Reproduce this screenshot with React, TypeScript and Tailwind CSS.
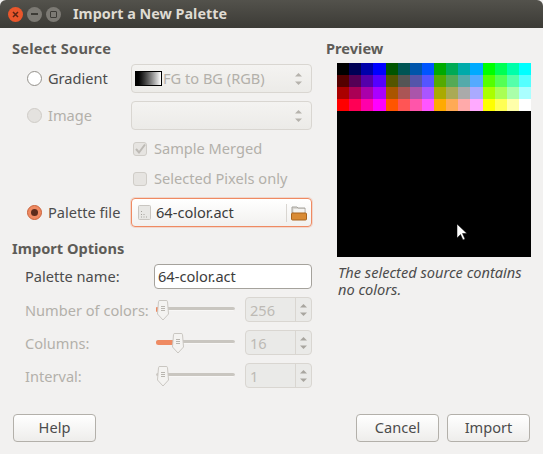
const levels = ['00', '55', 'aa', 'ff'];

const font = { fontFamily: '"Noto Sans", sans-serif' };

function UpDown({ color = '#a8a59f' }: { color?: string }) {
  return (
    <svg width="9" height="14" viewBox="0 0 9 14" fill={color}>
      <path d="M4.5 1 L8 4.5 L1 4.5 Z" />
      <path d="M1 9.5 L8 9.5 L4.5 13 Z" />
    </svg>
  );
}

function Radio({ checked, disabled }: { checked?: boolean; disabled?: boolean }) {
  if (checked) {
    return (
      <span className="ml-[15px] flex h-[15px] w-[15px] items-center justify-center rounded-full border border-[#c9623a] bg-[#ef8a62]">
        <span className="h-[7px] w-[7px] rounded-full bg-[#5c2c1c]" />
      </span>
    );
  }
  return (
    <span
      className={`ml-[15px] block h-[15px] w-[15px] rounded-full border ${
        disabled ? 'border-[#cfccc7] bg-[#e4e2df]' : 'border-[#94918b] bg-white'
      }`}
    />
  );
}

function Combo({ children }: { children?: React.ReactNode }) {
  return (
    <div className="flex h-[29px] w-[181px] items-center justify-between rounded-[4px] border border-[#d9d6d1] bg-gradient-to-b from-[#f4f3f1] to-[#ecebe8] pl-[3px] pr-[8px]">
      <div className="flex items-center gap-[1px]">{children}</div>
      <UpDown color="#b5b2ac" />
    </div>
  );
}

function Check({ label, checked }: { label: string; checked?: boolean }) {
  return (
    <div className="ml-[133px] flex h-[30px] items-center gap-[7px]">
      <span className="flex h-[14px] w-[14px] items-center justify-center rounded-[3px] border border-[#d0cdc8] bg-[#e6e4e1]">
        {checked && (
          <svg width="12" height="12" viewBox="0 0 12 12" fill="none" stroke="#bdbab5" strokeWidth="2">
            <path d="M2 6 L5 9.5 L11 1.5" />
          </svg>
        )}
      </span>
      <span className="text-[#b3b0aa]">{label}</span>
    </div>
  );
}

function Thumb() {
  return (
    <svg width="12" height="21" viewBox="0 0 12 21" className="shrink-0">
      <path
        d="M1.5 1.5 Q1.5 0.5 3 0.5 L9 0.5 Q10.5 0.5 10.5 1.5 L11.5 14 L6 20 L0.5 14 Z"
        fill="#f4f3f1"
        stroke="#c9c6c1"
      />
      <path d="M4 6.5 H8 M4 8.5 H8 M4 10.5 H8" stroke="#b8b5af" />
    </svg>
  );
}

function SliderRow({ label, value, fill, thumb }: { label: string; value: string; fill: number; thumb: number }) {
  return (
    <div className="flex h-[25px] items-center">
      <span className="ml-[25px] w-[131px] whitespace-nowrap pt-[2px] text-[#b3b0aa]">{label}</span>
      <div className="relative h-[25px] w-[79px]">
        <div className="absolute left-0 right-0 top-[10px] h-[4px] rounded-full border-b border-b-[#f8f7f6] bg-[#c9c6c0]" />
        <div className="absolute left-0 top-[10px] h-[5px] rounded-full bg-[#ef8a62]" style={{ width: fill }} />
        <div className="absolute top-[3px]" style={{ left: thumb }}>
          <Thumb />
        </div>
      </div>
      <div className="ml-[10px] flex h-[25px] w-[67px] rounded-[4px] border border-[#d9d6d1] bg-[#eaeae8]">
        <span className="flex-1 pl-[4px] leading-[25px] text-[#bdbab5]">{value}</span>
        <span className="flex w-[16px] items-center justify-center border-l border-[#d9d6d1]">
          <UpDown color="#a8a59f" />
        </span>
      </div>
    </div>
  );
}

function Button({ label }: { label: string }) {
  return (
    <button className="h-[28px] w-[83px] rounded-[4px] border border-[#b3b0aa] bg-gradient-to-b from-white to-[#eeedeb] text-[#4c4c4c]">
      {label}
    </button>
  );
}

export default function App() {
  return (
    <div className="h-[454px] w-[543px] overflow-hidden bg-[#f2f1f0] text-[14.6px] text-[#4c4c4c]" style={font}>
      {/* title bar */}
      <div className="flex h-[28px] items-center rounded-t-[6px] bg-gradient-to-b from-[#53524c] to-[#3c3b36]">
        <span className="ml-[8px] flex h-[15px] w-[15px] items-center justify-center rounded-full bg-[#e9562b]">
          <svg width="9" height="9" viewBox="0 0 9 9" stroke="#5a2413" strokeWidth="1.5">
            <path d="M2 2 L7 7 M7 2 L2 7" />
          </svg>
        </span>
        <span className="ml-[4px] flex h-[15px] w-[15px] items-center justify-center rounded-full bg-[#7c7a74]">
          <span className="h-[2px] w-[7px] bg-[#3c3b36]" />
        </span>
        <span className="ml-[4px] flex h-[15px] w-[15px] items-center justify-center rounded-full bg-[#7c7a74]">
          <span className="h-[7px] w-[7px] rounded-[1px] border border-[#3c3b36]" />
        </span>
        <span className="ml-[12px] text-[14.4px] font-bold text-[#dfdbd2]">Import a New Palette</span>
      </div>

      <div className="flex h-[386px]">
        {/* left column */}
        <div className="w-[326px] pl-[12px] pr-[14px]">
          <div className="mt-[11px] h-[25px] font-bold leading-[18px] tracking-[0.2px] text-[#5e5c58]">Select Source</div>
          <div className="flex h-[29px] items-center">
            <Radio />
            <span className="ml-[6px] w-[83px]">Gradient</span>
            <Combo>
              <span className="h-[15px] w-[27px] border border-black bg-gradient-to-r from-black to-white" />
              <span className="text-[#b3b0aa]">FG to BG (RGB)</span>
            </Combo>
          </div>
          <div className="mt-[8px] flex h-[29px] items-center">
            <Radio disabled />
            <span className="ml-[6px] w-[83px] text-[#b3b0aa]">Image</span>
            <Combo />
          </div>
          <div className="-ml-[12px] mt-[4px]">
            <Check label="Sample Merged" checked />
            <Check label="Selected Pixels only" />
          </div>
          <div className="mt-[4px] flex h-[29px] items-center">
            <Radio checked />
            <span className="ml-[6px] w-[83px]">Palette file</span>
            <div className="flex h-[29px] w-[181px] items-center rounded-[4px] border border-[#ef8a62] bg-gradient-to-b from-white to-[#f2f1ef] pl-[6px] shadow-[0_0_0_1px_rgba(239,138,98,0.25)]">
              <svg width="13" height="15" viewBox="0 0 13 15" className="shrink-0">
                <rect x="0.5" y="0.5" width="12" height="14" rx="1" fill="#e8e7e4" stroke="#c9c6c1" />
                <path d="M3.5 6 V7 M3.5 9 V10 M3.5 11.5 V12.5 M6 11.5 V12.5 M8.5 11.5 V12.5 M6 9 V10" stroke="#a5a29c" />
              </svg>
              <span className="ml-[5px] flex-1 text-[#3c3c3c]">64-color.act</span>
              <span className="h-[18px] w-px bg-[#d9d6d1]" />
              <svg width="16" height="16" viewBox="0 0 16 16" className="mx-[4px]">
                <path d="M1 2 H6 L7 3 H14 V8 H1 Z" fill="#d8d6d1" stroke="#a5a29c" />
                <rect x="2.5" y="4" width="11" height="4" fill="#f4f3f1" />
                <rect x="0.5" y="8" width="15" height="7" rx="1" fill="#d98b35" stroke="#a9651f" />
              </svg>
            </div>
          </div>
          <div className="mt-[10px] h-[27px] font-bold leading-[22px] text-[#5e5c58]">Import Options</div>
          <div className="flex h-[25px] items-center">
            <span className="ml-[13px] w-[129px]">Palette name:</span>
            <div className="h-[25px] w-[158px] rounded-[4px] border border-[#a5a29c] bg-white pl-[3px] leading-[23px] text-[#3c3c3c]">
              64-color.act
            </div>
          </div>
          <div className="-ml-[12px] mt-[8px] flex flex-col gap-[8px]">
            <SliderRow label="Number of colors:" value="256" fill={2} thumb={1} />
            <SliderRow label="Columns:" value="16" fill={18} thumb={16} />
            <SliderRow label="Interval:" value="1" fill={0} thumb={1} />
          </div>
        </div>

        {/* right column */}
        <div className="w-[217px]">
          <div className="mt-[11px] h-[24px] font-bold leading-[18px] text-[#5e5c58]">Preview</div>
          <div className="relative ml-[11px] h-[194px] w-[194px] bg-black">
            <div className="grid grid-cols-16">
              {levels.map((r) =>
                levels.map((g) =>
                  levels.map((b) => (
                    <div key={r + g + b} className="h-[12px]" style={{ backgroundColor: `#${r}${g}${b}` }} />
                  )),
                ),
              )}
            </div>
            <svg width="12" height="18" viewBox="0 0 12 18" className="absolute left-[119px] top-[160px]">
              <path d="M1 1 V15 L4.5 11.5 L7 17 L9 16 L6.5 10.5 H11 Z" fill="#fff" stroke="#000" strokeWidth="0.5" />
            </svg>
          </div>
          <p className="ml-[12px] mt-[7px] w-[200px] leading-[17px] italic text-[#4c4c4c]">
            The selected source contains no colors.
          </p>
        </div>
      </div>

      {/* actions */}
      <div className="flex justify-between pl-[13px] pr-[13px]">
        <Button label="Help" />
        <div className="flex gap-[8px]">
          <Button label="Cancel" />
          <Button label="Import" />
        </div>
      </div>
    </div>
  );
}
